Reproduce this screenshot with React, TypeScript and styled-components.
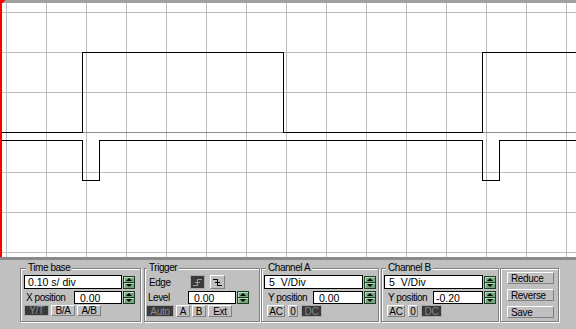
import React from "react";
import styled, { createGlobalStyle } from "styled-components";

const GlobalStyle = createGlobalStyle`
  html, body {
    margin: 0;
    padding: 0;
    background: #c0c0c0;
  }
  body {
    font-family: "Liberation Sans", Arial, sans-serif;
    color: #000;
  }
`;

const Window = styled.div`
  width: 576px;
  height: 329px;
  overflow: hidden;
  display: flex;
  flex-direction: column;
  background: #c0c0c0;
`;

const Screen = styled.svg`
  display: block;
  flex: none;
`;

const Panel = styled.div`
  flex: 1;
  display: flex;
  align-items: flex-start;
  padding-top: 8px;
`;

const Group = styled.div<{ $w: number; $ml: number; $pl: number; $pt?: number; $gap?: number }>`
  position: relative;
  box-sizing: border-box;
  width: ${(p) => p.$w}px;
  height: 54px;
  margin-left: ${(p) => p.$ml}px;
  padding: ${(p) => p.$pt ?? 6}px 0 0 ${(p) => p.$pl}px;
  border: 1px solid #808080;
  box-shadow: inset 1px 1px 0 #fff, 1px 1px 0 #fff;
  display: flex;
  flex-direction: column;
  gap: ${(p) => p.$gap ?? 0}px;
`;

const Legend = styled.span<{ $x: number }>`
  position: absolute;
  top: -7px;
  left: ${(p) => p.$x}px;
  padding: 0 2px;
  background: #c0c0c0;
  font-size: 10px;
  letter-spacing: -0.45px;
  line-height: 12px;
  white-space: nowrap;
`;

const Row = styled.div<{ $h: number; $mt?: number; $ml?: number }>`
  display: flex;
  align-items: center;
  height: ${(p) => p.$h}px;
  margin-top: ${(p) => p.$mt ?? 0}px;
  margin-left: ${(p) => p.$ml ?? 0}px;
`;

const Label = styled.span<{ $w: number; $ml?: number }>`
  width: ${(p) => p.$w}px;
  margin-left: ${(p) => p.$ml ?? 0}px;
  font-size: 10px;
  letter-spacing: -0.45px;
  white-space: nowrap;
`;

const Field = styled.div<{ $w: number; $pad?: number }>`
  box-sizing: border-box;
  width: ${(p) => p.$w}px;
  height: 100%;
  display: flex;
  align-items: center;
  padding-left: ${(p) => p.$pad ?? 4}px;
  background: #fff;
  border: 1px solid #000;
  font-size: 10.5px;
  white-space: pre;
`;

const Spinner = styled.div`
  box-sizing: border-box;
  width: 12px;
  height: 13px;
  margin-left: 1px;
  display: flex;
  flex-direction: column;
  border: 1px solid #1c3a22;
  background: #1c3a22;
  gap: 1px;
`;

const SpinBtn = styled.div<{ $down?: boolean }>`
  flex: 1;
  display: flex;
  align-items: center;
  justify-content: center;
  background: #74a77c;
  box-shadow: inset 1px 1px 0 #b9dcbf;

  &::after {
    content: "";
    border-left: 3px solid transparent;
    border-right: 3px solid transparent;
    ${(p) => (p.$down ? "border-top: 3px solid #000;" : "border-bottom: 3px solid #000;")}
  }
`;

const Btn = styled.div<{ $w: number; $on?: boolean; $gap?: number }>`
  box-sizing: border-box;
  width: ${(p) => p.$w}px;
  height: 100%;
  margin-right: ${(p) => p.$gap ?? 2}px;
  display: flex;
  align-items: center;
  justify-content: center;
  font-size: 10px;
  letter-spacing: -0.3px;
  border: 1px solid;
  border-color: ${(p) => (p.$on ? "#a8a8a8" : "#fff #808080 #808080 #fff")};
  background: ${(p) => (p.$on ? "#3a3a3a" : "#c0c0c0")};
  color: ${(p) => (p.$on ? "#8a8a8a" : "#000")};
`;

const SideBtn = styled.div`
  box-sizing: border-box;
  width: 47px;
  height: 12px;
  padding-left: 3px;
  display: flex;
  align-items: center;
  font-size: 10px;
  letter-spacing: -0.35px;
  border: 1px solid;
  border-color: #fff #808080 #808080 #fff;
`;

const Spin = () => (
  <Spinner>
    <SpinBtn />
    <SpinBtn $down />
  </Spinner>
);

const EdgeIcon = ({ falling, color }: { falling?: boolean; color: string }) => (
  <svg width="9" height="7" viewBox="0 0 9 7" shapeRendering="crispEdges">
    {falling ? (
      <path d="M0 0.5H4.5V6.5H9M2 3.5H7" stroke={color} fill="none" strokeWidth="1" />
    ) : (
      <path d="M0 6.5H4.5V0.5H9M2 3.5H7" stroke={color} fill="none" strokeWidth="1" />
    )}
  </svg>
);

const vLines = Array.from({ length: 15 }, (_, i) => 6.5 + 40 * i);
const hLines = Array.from({ length: 7 }, (_, i) => 12.5 + 40 * i);

const traceA = "M2 132.5H82.5V52.5H283.5V132.5H482.5V52.5H576";
const traceB = "M2 140.5H82.5V180.5H99.5V140.5H482.5V180.5H499.5V140.5H576";

const ScopeScreen = () => (
  <Screen width={576} height={260} viewBox="0 0 576 260" shapeRendering="crispEdges">
    <rect width="576" height="260" fill="#fff" />
    <rect width="576" height="3" fill="#a0a0a0" />
    {vLines.map((x) => (
      <line key={x} x1={x} x2={x} y1={3} y2={257} stroke="#bdbdbd" />
    ))}
    {hLines.map((y) => (
      <line key={y} x1={0} x2={576} y1={y} y2={y} stroke={y === 132.5 ? "#8e8e8e" : "#bdbdbd"} />
    ))}
    <rect y="257" width="576" height="3" fill="#8a8a8a" />
    <path d={traceA} stroke="#000" fill="none" />
    <path d={traceB} stroke="#000" fill="none" />
    <rect x="0" y="0" width="2" height="257" fill="#f00" />
    <polygon points="0,0 5,0 2,4" fill="#f00" />
  </Screen>
);

const Channel = ({ name, volts, ypos, ml, pad }: { name: string; volts: string; ypos: string; ml: number; pad: number }) => (
  <Group $w={118} $ml={ml} $pl={2}>
    <Legend $x={4}>{name}</Legend>
    <Row $h={14}>
      <Field $w={99}>{volts}</Field>
      <Spin />
    </Row>
    <Row $h={13} $mt={2}>
      <Label $w={45} $ml={4}>Y position</Label>
      <Field $w={50} $pad={pad}>{ypos}</Field>
      <Spin />
    </Row>
    <Row $h={12} $mt={1} $ml={3}>
      <Btn $w={18} $gap={3}>AC</Btn>
      <Btn $w={10} $gap={3}>0</Btn>
      <Btn $w={21} $on>DC</Btn>
    </Row>
  </Group>
);

const App: React.FC = () => {
  return (
    <>
      <GlobalStyle />
      <Window>
        <ScopeScreen />
        <Panel>
          <Group $w={121} $ml={20} $pl={3}>
            <Legend $x={5}>Time base</Legend>
            <Row $h={14}>
              <Field $w={98} $pad={3}>0.10 s/ div</Field>
              <Spin />
            </Row>
            <Row $h={13} $mt={2}>
              <Label $w={48} $ml={2}>X position</Label>
              <Field $w={48} $pad={5}>0.00</Field>
              <Spin />
            </Row>
            <Row $h={11} $mt={1}>
              <Btn $w={25} $on>Y/T</Btn>
              <Btn $w={24}>B/A</Btn>
              <Btn $w={24}>A/B</Btn>
            </Row>
          </Group>

          <Group $w={116} $ml={3} $pl={3}>
            <Legend $x={2}>Trigger</Legend>
            <Row $h={14}>
              <Label $w={41} $ml={1}>Edge</Label>
              <Btn $w={15} $gap={5} $on>
                <EdgeIcon color="#9a9a9a" />
              </Btn>
              <Btn $w={15}>
                <EdgeIcon falling color="#000" />
              </Btn>
            </Row>
            <Row $h={13} $mt={2}>
              <Label $w={40} $ml={0}>Level</Label>
              <Field $w={48} $pad={5}>0.00</Field>
              <Spin />
            </Row>
            <Row $h={12} $mt={1} $ml={-2}>
              <Btn $w={28} $on>Auto</Btn>
              <Btn $w={14}>A</Btn>
              <Btn $w={14}>B</Btn>
              <Btn $w={24}>Ext</Btn>
            </Row>
          </Group>

          <Channel name="Channel A" volts="5  V/Div" ypos="0.00" ml={1} pad={5} />
          <Channel name="Channel B" volts="5  V/Div" ypos="-0.20" ml={2} pad={2} />

          <Group $w={59} $ml={1} $pl={6} $pt={3} $gap={5}>
            <SideBtn>Reduce</SideBtn>
            <SideBtn>Reverse</SideBtn>
            <SideBtn>Save</SideBtn>
          </Group>
        </Panel>
      </Window>
    </>
  );
};

export default App;
